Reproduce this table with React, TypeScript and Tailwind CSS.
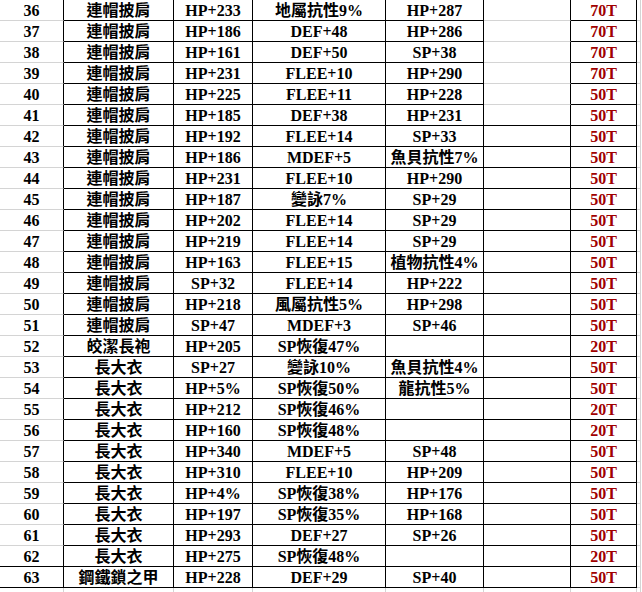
import React from "react";

type R = [string, string, string, string, string, string];

const rows: R[] = [
  ["36", "連帽披肩", "HP+233", "地屬抗性9%", "HP+287", "70T"],
  ["37", "連帽披肩", "HP+186", "DEF+48", "HP+286", "70T"],
  ["38", "連帽披肩", "HP+161", "DEF+50", "SP+38", "70T"],
  ["39", "連帽披肩", "HP+231", "FLEE+10", "HP+290", "70T"],
  ["40", "連帽披肩", "HP+225", "FLEE+11", "HP+228", "50T"],
  ["41", "連帽披肩", "HP+185", "DEF+38", "HP+231", "50T"],
  ["42", "連帽披肩", "HP+192", "FLEE+14", "SP+33", "50T"],
  ["43", "連帽披肩", "HP+186", "MDEF+5", "魚貝抗性7%", "50T"],
  ["44", "連帽披肩", "HP+231", "FLEE+10", "HP+290", "50T"],
  ["45", "連帽披肩", "HP+187", "變詠7%", "SP+29", "50T"],
  ["46", "連帽披肩", "HP+202", "FLEE+14", "SP+29", "50T"],
  ["47", "連帽披肩", "HP+219", "FLEE+14", "SP+29", "50T"],
  ["48", "連帽披肩", "HP+163", "FLEE+15", "植物抗性4%", "50T"],
  ["49", "連帽披肩", "SP+32", "FLEE+14", "HP+222", "50T"],
  ["50", "連帽披肩", "HP+218", "風屬抗性5%", "HP+298", "50T"],
  ["51", "連帽披肩", "SP+47", "MDEF+3", "SP+46", "50T"],
  ["52", "皎潔長袍", "HP+205", "SP恢復47%", "", "20T"],
  ["53", "長大衣", "SP+27", "變詠10%", "魚貝抗性4%", "50T"],
  ["54", "長大衣", "HP+5%", "SP恢復50%", "龍抗性5%", "50T"],
  ["55", "長大衣", "HP+212", "SP恢復46%", "", "20T"],
  ["56", "長大衣", "HP+160", "SP恢復48%", "", "20T"],
  ["57", "長大衣", "HP+340", "MDEF+5", "SP+48", "50T"],
  ["58", "長大衣", "HP+310", "FLEE+10", "HP+209", "50T"],
  ["59", "長大衣", "HP+4%", "SP恢復38%", "HP+176", "50T"],
  ["60", "長大衣", "HP+197", "SP恢復35%", "HP+168", "50T"],
  ["61", "長大衣", "HP+293", "DEF+27", "SP+26", "50T"],
  ["62", "長大衣", "HP+275", "SP恢復48%", "", "20T"],
  ["63", "鋼鐵鎖之甲", "HP+228", "DEF+29", "SP+40", "50T"],
];

const cellBase = "h-[21px] shrink-0 flex items-end justify-center border-b";

function DataRow({ r, idx }: { r: R; idx: number }) {
  const nearLast = idx >= rows.length - 2;
  const fGray = idx < 5;
  return (
    <div className="flex">
      <div
        className={`${cellBase} w-[64px] border-r border-r-black ${
          nearLast ? "border-b-black" : "border-b-[#d4d4d4]"
        }`}
      >
        <span className="pb-[1px]">{r[0]}</span>
      </div>
      <div className={`${cellBase} w-[110px] border-r border-r-black border-b-black`}>
        <span className="pb-[1px]">{r[1]}</span>
      </div>
      <div className={`${cellBase} w-[79px] border-r border-r-black border-b-black`}>
        <span className="pb-[1px]">{r[2]}</span>
      </div>
      <div className={`${cellBase} w-[133px] border-r border-r-black border-b-black`}>
        <span className="pb-[1px]">{r[3]}</span>
      </div>
      <div className={`${cellBase} w-[98px] border-r border-r-black border-b-black`}>
        <span className="pb-[1px]">{r[4]}</span>
      </div>
      <div
        className={`${cellBase} w-[87px] border-r border-r-black ${
          fGray && !nearLast ? "border-b-[#d4d4d4]" : "border-b-black"
        }`}
      ></div>
      <div className={`${cellBase} w-[66px] border-r border-r-black border-b-black text-[#a00000]`}>
        <span className="pb-[1px]">{r[5]}</span>
      </div>
      <div className={`${cellBase} w-[4px] border-r border-r-[#d4d4d4] border-b-[#d4d4d4]`}></div>
    </div>
  );
}

function EmptyRow() {
  const c = "h-[21px] shrink-0 border-r border-r-[#d4d4d4] border-b border-b-[#d4d4d4]";
  return (
    <div className="flex">
      <div className={`${c} w-[64px]`}></div>
      <div className={`${c} w-[110px]`}></div>
      <div className={`${c} w-[79px]`}></div>
      <div className={`${c} w-[133px]`}></div>
      <div className={`${c} w-[98px]`}></div>
      <div className={`${c} w-[87px]`}></div>
      <div className={`${c} w-[66px]`}></div>
      <div className={`${c} w-[4px]`}></div>
    </div>
  );
}

export default function App() {
  return (
    <div className="w-[642px] h-[592px] overflow-hidden bg-white text-black font-['Liberation_Serif','Noto_Sans_CJK_TC',serif] text-[16px] leading-[16px] font-bold">
      {rows.map((r, i) => (
        <DataRow key={r[0]} r={r} idx={i} />
      ))}
      <EmptyRow />
    </div>
  );
}
